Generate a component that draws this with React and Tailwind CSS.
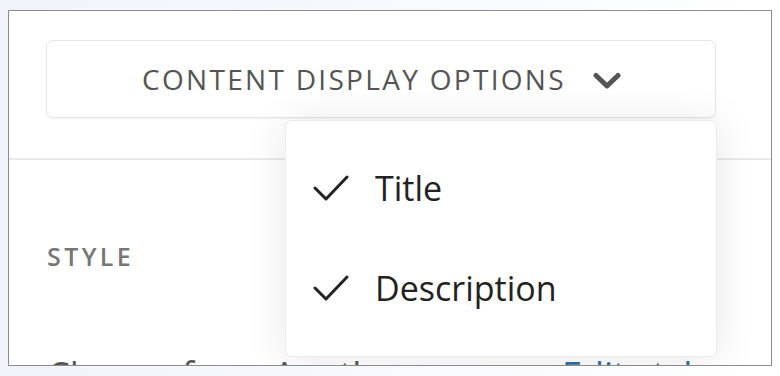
import React from "react";

function Check() {
  return (
    <svg width="36" height="26" viewBox="0 0 36 26" fill="none" className="shrink-0">
      <polyline points="2,13 13,24 34,2" stroke="#222" strokeWidth="3" strokeLinecap="round" strokeLinejoin="round" />
    </svg>
  );
}

function Chevron() {
  return (
    <svg width="30" height="18" viewBox="0 0 30 18" fill="none" className="shrink-0 mt-[4px]">
      <polyline points="4,3.5 15,14 26,3.5" stroke="#555" strokeWidth="5" strokeLinecap="round" strokeLinejoin="round" />
    </svg>
  );
}

export default function App() {
  return (
    <div
      className="w-[780px] h-[376px] pt-[10px] pl-[8px] bg-gradient-to-r from-[#f0f4fa] via-[#f7f9fc] to-[#ffffff] overflow-hidden"
      style={{ fontFamily: '"Open Sans", "Noto Sans", sans-serif' }}
    >
      <div className="relative w-[764px] h-[356px] border border-[#8c8c8c] bg-white overflow-hidden">
        <div className="px-[37px] pt-[29px] pb-[40px] border-b-2 border-[#e9e9e9]">
          <div className="h-[78px] w-[670px] rounded-[7px] border border-[#e6e6e6] shadow-[0_1px_2px_rgba(0,0,0,0.05)] flex items-center justify-center gap-[26px] pl-[2px]">
            <span className="text-[28px] leading-none tracking-[2.3px] text-[#555]">CONTENT DISPLAY OPTIONS</span>
            <Chevron />
          </div>
        </div>
        <div className="pl-[38px] pt-[81px]">
          <div className="text-[25px] leading-[30px] tracking-[3.4px] text-[#777] font-semibold">STYLE</div>
          <div className="mt-[86px] flex text-[36px] leading-none">
            <span className="text-[#555] w-[515px] shrink-0">Choose from Another</span>
            <span className="text-[#2f6fa7] whitespace-nowrap">Edit style</span>
          </div>
        </div>
        <div className="absolute left-[276px] top-[109px] w-[432px] h-[237px] bg-white rounded-[7px] border border-[#ececec] shadow-[0_2px_40px_rgba(0,0,0,0.10)] pt-[17px] pl-[27px] flex flex-col">
          <div className="h-[100px] flex items-center gap-[26px]">
            <Check />
            <span className="text-[34px] leading-none text-[#222]">Title</span>
          </div>
          <div className="h-[100px] flex items-center gap-[26px]">
            <Check />
            <span className="text-[34px] leading-none text-[#222]">Description</span>
          </div>
        </div>
      </div>
    </div>
  );
}
